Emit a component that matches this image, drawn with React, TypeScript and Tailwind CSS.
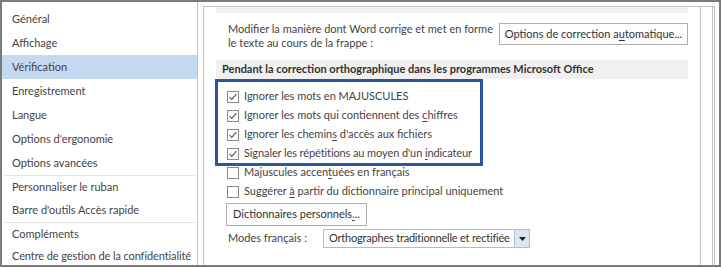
import React from 'react';

const navTop = ['Général', 'Affichage', 'Vérification', 'Enregistrement', 'Langue', "Options d'ergonomie", 'Options avancées'];

function CheckBox({ checked }: { checked: boolean }) {
  return (
    <svg width="12" height="12" viewBox="0 0 12 12" className="shrink-0">
      <rect x="0.5" y="0.5" width="11" height="11" fill="#fff" stroke="#8a8a8a" />
      {checked && <path d="M2.6 6.1 L4.8 8.4 L9.4 3.2" fill="none" stroke="#555" strokeWidth="1.1" />}
    </svg>
  );
}

function Row({ checked, children }: { checked: boolean; children: React.ReactNode }) {
  return (
    <div className="flex h-[19px] items-center">
      <CheckBox checked={checked} />
      <span className="ml-[5px] whitespace-nowrap">{children}</span>
    </div>
  );
}

function U({ children }: { children: React.ReactNode }) {
  return <span className="underline underline-offset-2">{children}</span>;
}

export default function App() {
  return (
    <div className="flex h-[267px] w-[721px] overflow-hidden border-2 border-[#7b7b7b] bg-white font-['Lato','Liberation_Sans',sans-serif] text-[11px] text-[#444]">
      {/* navigation */}
      <div className="w-[196px] shrink-0 border-r border-[#c3c3c3] pt-[5px]">
        {navTop.map((label) => (
          <div
            key={label}
            className={
              label === 'Vérification'
                ? 'flex h-[24px] items-center bg-[#c5d8f1] pl-[10px]'
                : 'flex h-[24px] items-center pl-[10px]'
            }
          >
            {label}
          </div>
        ))}
        <div className="mx-[2px] h-px bg-[#e1e1e1]" />
        <div className="flex h-[22px] items-center pl-[10px]">Personnaliser le ruban</div>
        <div className="flex h-[24px] items-center pl-[10px]">Barre d'outils Accès rapide</div>
        <div className="mx-[2px] h-px bg-[#e1e1e1]" />
        <div className="flex h-[23px] items-center pl-[10px]">Compléments</div>
        <div className="flex h-[20px] items-center whitespace-nowrap pl-[10px] tracking-[-0.1px]">
          Centre de gestion de la confidentialité
        </div>
      </div>

      {/* options panel */}
      <div className="ml-[5px] mr-[4px] mt-[4px] flex flex-1 border-l border-t border-r-[3px] border-[#c3c3c3] border-r-[#c3c3c3] [border-right-style:double]">
        <div className="flex-1 px-[12px]">
          <div className="h-[6px] bg-[#f0f0f0]" />

          <div className="mt-[10px] flex items-start justify-between">
            <div className="-mt-px pl-[12px] leading-[14px]">
              <div>Modifier la manière dont Word corrige et met en forme</div>
              <div>le texte au cours de la frappe :</div>
            </div>
            <button className="flex h-[22px] w-[189px] items-center justify-center border border-[#adadad] bg-[#fdfdfd] text-[#333]">
              Options de correction a<U>u</U>tomatique...
            </button>
          </div>

          <div className="mt-[10px] flex h-[19px] items-center bg-[#f0f0f0] pl-[6px] font-bold text-[#333]">
            Pendant la correction orthographique dans les programmes Microsoft Office
          </div>

          <div className="-ml-px w-[268px] border-[3px] border-[#2b579a] pl-[9px] pt-[5px]">
            <Row checked>Ignorer les mots en MAJUSCULES</Row>
            <Row checked>
              Ignorer les mots qui contiennent des <U>c</U>hiffres
            </Row>
            <Row checked>
              Ignorer les chemin<U>s</U> d'accès aux fichiers
            </Row>
            <Row checked>
              <span className="tracking-[-0.1px]">
                Signaler les répétitions au moyen d'un <U>i</U>ndicateur
              </span>
            </Row>
          </div>

          <div className="-mt-[3px] pl-[11px]">
            <Row checked={false}>
              Majuscules accen<U>t</U>uées en français
            </Row>
            <Row checked={false}>
              Suggérer <U>à</U> partir du dictionnaire principal uniquement
            </Row>
          </div>

          <button className="ml-[10px] mt-[2px] flex h-[23px] w-[141px] items-center justify-center border border-[#adadad] bg-[#fdfdfd] text-[#333]">
            Dictionnaires personnels<U>.</U>..
          </button>

          <div className="mt-[3px] flex items-center">
            <span className="w-[107px] pl-[12px]">Modes français :</span>
            <div className="flex h-[19px] w-[207px] items-center border border-[#abbcd6] bg-white">
              <span className="flex-1 overflow-hidden whitespace-nowrap pl-[5px] tracking-[-0.2px] text-[#333]">
                Orthographes traditionnelle et rectifiée
              </span>
              <div className="flex h-full w-[15px] items-center justify-center border-l border-[#abbcd6] bg-[#dce6f4]">
                <svg width="7" height="4" viewBox="0 0 7 4">
                  <path d="M0 0 H7 L3.5 4 Z" fill="#222" />
                </svg>
              </div>
            </div>
          </div>
        </div>

        {/* empty scroll track */}
        <div className="w-[12px] border-l border-[#c3c3c3]" />
      </div>
    </div>
  );
}
